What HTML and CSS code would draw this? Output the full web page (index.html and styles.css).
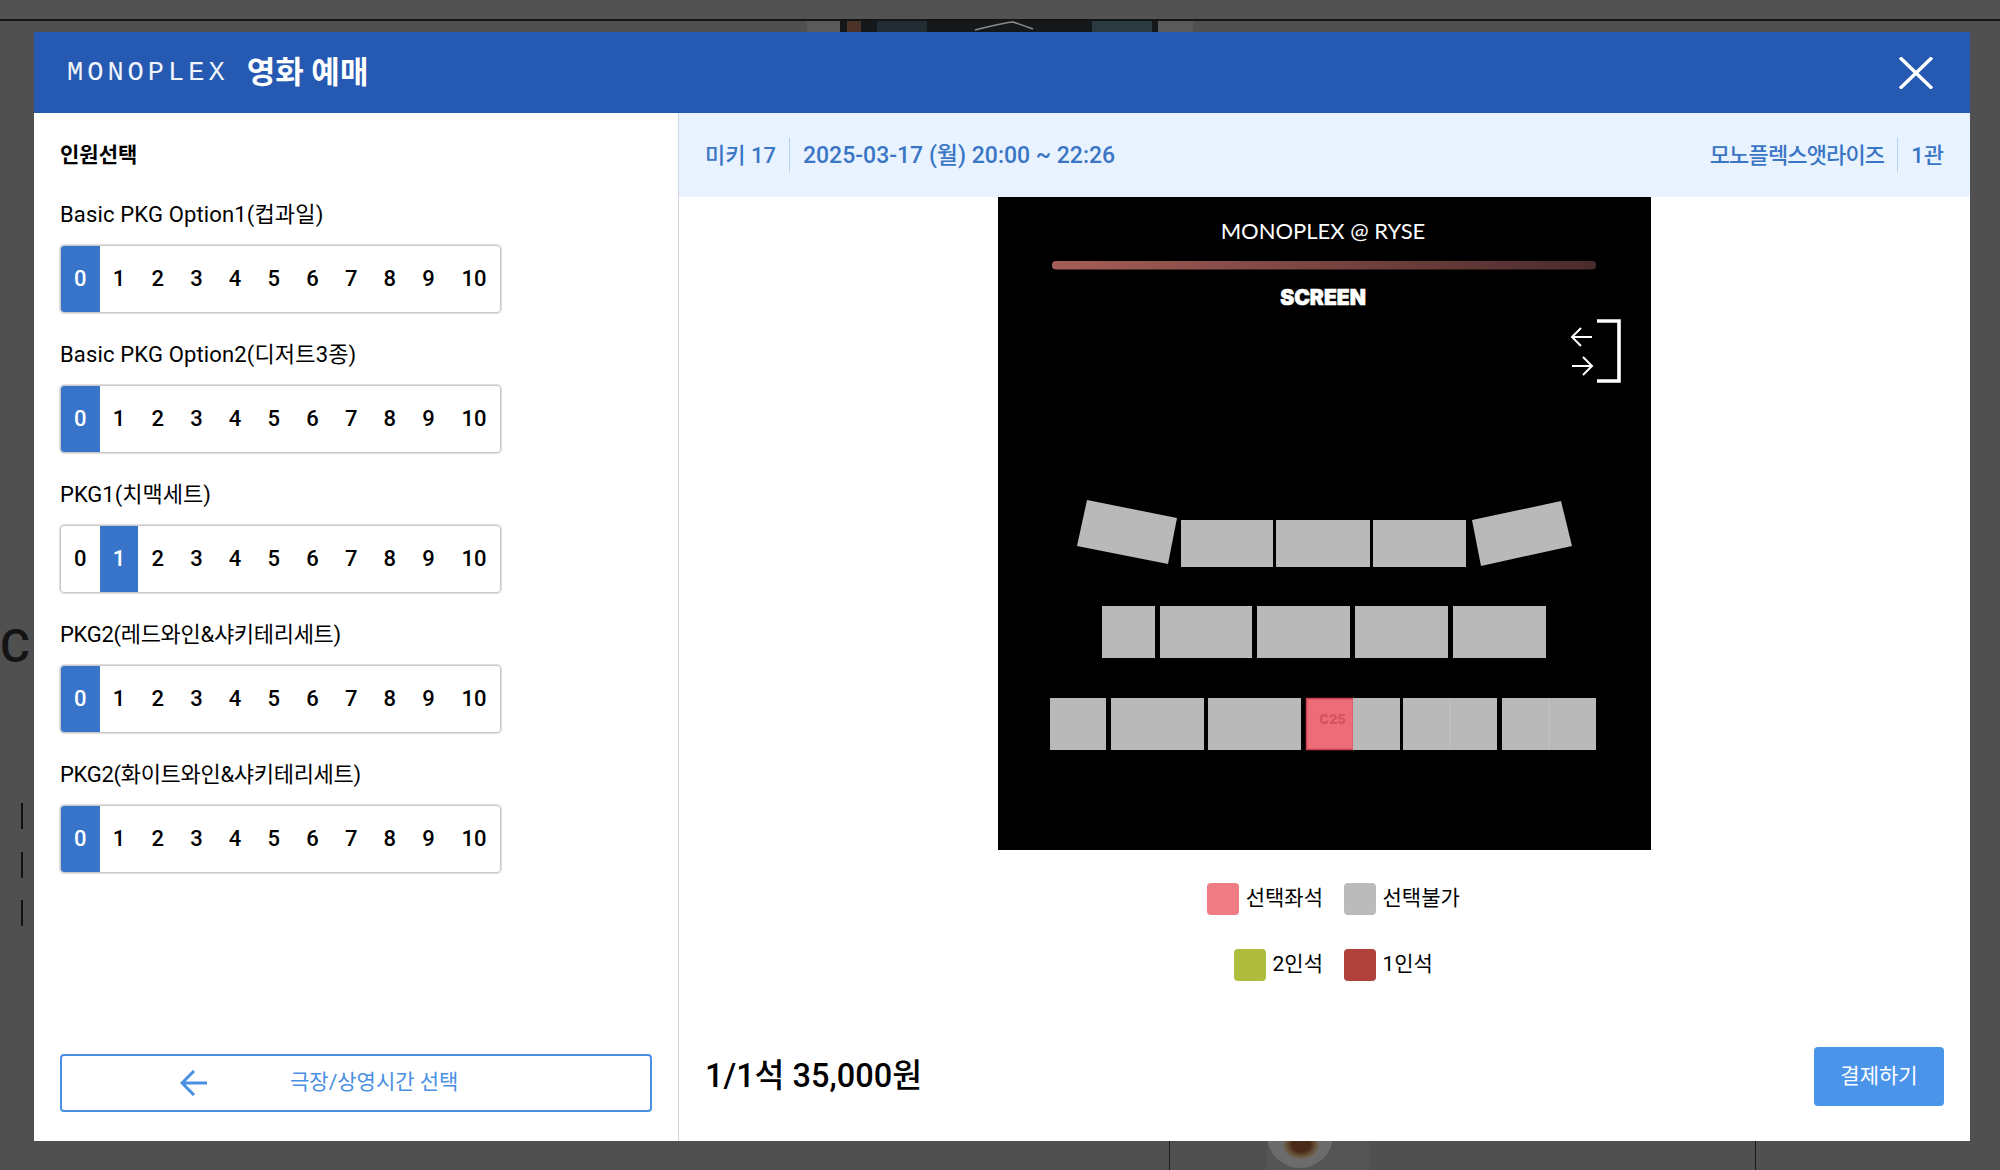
FILE: index.html
```html
<!DOCTYPE html>
<html lang="ko">
<head>
  <meta charset="UTF-8" />
  <title>MONOPLEX 영화 예매</title>
  <link rel="stylesheet" href="styles.css">
</head>
<body>
  <div class="backdrop">
    <div class="bg-topbar"></div>
    <svg class="bg-poster-top" viewBox="0 0 386 11" width="386" height="11">
      <rect width="386" height="11" fill="#5a5a5a" />
      <rect x="33" width="318" height="11" fill="#15181b" />
      <rect x="40" width="14" height="11" fill="#4a3229" />
      <rect x="70" width="50" height="11" fill="#222c33" />
      <rect x="285" width="60" height="11" fill="#2b3a3e" />
      <path d="M168 9 C185 5 195 2 206 1 C212 3 218 5 226 8" fill="none" stroke="#8a8a8a" stroke-width="1.5" />
    </svg>
    <div class="bg-letter">C</div>
    <div class="bg-tick tick1"></div>
    <div class="bg-tick tick2"></div>
    <div class="bg-tick tick3"></div>
    <div class="bg-poster-bottom"><div class="bg-plate"></div><div class="bg-food"></div></div>
    <div class="bg-vline vline1"></div>
    <div class="bg-vline vline2"></div>
  </div>

  <div class="modal">
    <header class="modal-head">
      <div class="brand">MONOPLEX</div>
      <div class="modal-title">영화 예매</div>
      <svg class="close" viewBox="0 0 34 32" width="34" height="32">
        <path d="M1 0.5 L33 31.5 M33 0.5 L1 31.5" fill="none" stroke="#fff" stroke-width="3.4" />
      </svg>
    </header>

    <div class="modal-body">
      <section class="people">
        <h2 class="people-title">인원선택</h2>

        <div class="opt-label wide">Basic PKG Option1(컵과일)</div>
        <div class="seg">
          <span class="cell on">0</span><span class="cell">1</span><span class="cell">2</span><span class="cell">3</span><span class="cell">4</span><span class="cell">5</span><span class="cell">6</span><span class="cell">7</span><span class="cell">8</span><span class="cell">9</span><span class="cell last">10</span>
        </div>

        <div class="opt-label wide">Basic PKG Option2(디저트3종)</div>
        <div class="seg">
          <span class="cell on">0</span><span class="cell">1</span><span class="cell">2</span><span class="cell">3</span><span class="cell">4</span><span class="cell">5</span><span class="cell">6</span><span class="cell">7</span><span class="cell">8</span><span class="cell">9</span><span class="cell last">10</span>
        </div>

        <div class="opt-label">PKG1(치맥세트)</div>
        <div class="seg">
          <span class="cell">0</span><span class="cell on">1</span><span class="cell">2</span><span class="cell">3</span><span class="cell">4</span><span class="cell">5</span><span class="cell">6</span><span class="cell">7</span><span class="cell">8</span><span class="cell">9</span><span class="cell last">10</span>
        </div>

        <div class="opt-label tight">PKG2(레드와인&amp;샤키테리세트)</div>
        <div class="seg">
          <span class="cell on">0</span><span class="cell">1</span><span class="cell">2</span><span class="cell">3</span><span class="cell">4</span><span class="cell">5</span><span class="cell">6</span><span class="cell">7</span><span class="cell">8</span><span class="cell">9</span><span class="cell last">10</span>
        </div>

        <div class="opt-label tight">PKG2(화이트와인&amp;샤키테리세트)</div>
        <div class="seg">
          <span class="cell on">0</span><span class="cell">1</span><span class="cell">2</span><span class="cell">3</span><span class="cell">4</span><span class="cell">5</span><span class="cell">6</span><span class="cell">7</span><span class="cell">8</span><span class="cell">9</span><span class="cell last">10</span>
        </div>

        <button class="back-btn">
          <svg class="back-arrow" viewBox="0 0 28 26" width="28" height="26">
            <path d="M14 1 L2 13 L14 25 M2 13 L27 13" fill="none" stroke="#4a90e2" stroke-width="3" />
          </svg>
          <span>극장/상영시간 선택</span>
        </button>
      </section>

      <section class="booking">
        <div class="info-bar">
          <span class="info-item">미키 17</span>
          <span class="info-item divided date">2025-03-17 (월) 20:00 ~ 22:26</span>
          <span class="info-item push">모노플렉스앳라이즈</span>
          <span class="info-item divided">1관</span>
        </div>

        <svg class="seatmap" viewBox="0 0 653 653" width="653" height="653">
          <defs>
            <linearGradient id="screenGrad">
              <stop offset="0" stop-color="#a65e57" />
              <stop offset="1" stop-color="#4a2b2b" />
            </linearGradient>
          </defs>
          <rect width="653" height="653" fill="#000" />
          <text class="map-name" x="325" y="42" text-anchor="middle">MONOPLEX @ RYSE</text>
          <rect x="54" y="64" width="544" height="8.5" rx="4" fill="url(#screenGrad)" />
          <text class="map-screen" x="325" y="108" text-anchor="middle">SCREEN</text>

          <path class="exit" d="M599 124 H621 V184 H599" />
          <path class="exit thin" d="M594 140 H574 M583 131 L574 140 L583 149" />
          <path class="exit thin" d="M574 169 H594 M585 160 L594 169 L585 178" />

          <polygon class="seat" points="89,303 179,321 170,367 79,349" />
          <rect class="seat" x="183" y="323" width="92" height="47" />
          <rect class="seat" x="278" y="323" width="94" height="47" />
          <rect class="seat" x="375" y="323" width="93" height="47" />
          <polygon class="seat" points="474,323 563,304 574,349 483,369" />

          <rect class="seat" x="104" y="409" width="53" height="52" />
          <rect class="seat" x="162" y="409" width="92" height="52" />
          <rect class="seat" x="259" y="409" width="93" height="52" />
          <rect class="seat" x="357" y="409" width="93" height="52" />
          <rect class="seat" x="455" y="409" width="93" height="52" />

          <rect class="seat" x="52" y="501" width="56" height="52" />
          <rect class="seat" x="113" y="501" width="93" height="52" />
          <rect class="seat" x="210" y="501" width="93" height="52" />
          <rect class="seat-on" x="308.5" y="501.5" width="47" height="51" />
          <text class="seat-code" x="334.5" y="527" text-anchor="middle">C25</text>
          <rect class="seat" x="355" y="501" width="47" height="52" />
          <rect class="seat" x="405" y="501" width="94" height="52" />
          <rect class="seat" x="504" y="501" width="94" height="52" />

          <path class="seam" d="M452 501 V553 M551 501 V553" />
        </svg>

        <div class="legend">
          <div class="legend-item"><i class="swatch pick"></i>선택좌석</div>
          <div class="legend-item right"><i class="swatch off"></i>선택불가</div>
          <div class="legend-item"><i class="swatch two"></i>2인석</div>
          <div class="legend-item right"><i class="swatch one"></i>1인석</div>
        </div>

        <footer class="pay-row">
          <div class="price">1/1석 35,000원</div>
          <button class="pay-btn"><span>결제하기</span></button>
        </footer>
      </section>
    </div>
  </div>
</body>
</html>
```

FILE: styles.css
```css
* {
  box-sizing: border-box;
}
html, body {
  margin: 0;
  height: 1170px;
  overflow: hidden;
}
body {
  position: relative;
  background: #505050;
  font-family: Roboto, "Noto Sans CJK KR", sans-serif;
  color: #000;
  padding: 32px 30px 0 34px;
}

/* dimmed page behind the modal */
.backdrop {
  position: absolute;
  inset: 0;
  overflow: hidden;
}
.bg-topbar {
  height: 21px;
  background: #525252;
  border-bottom: 2px solid #141414;
}
.bg-poster-top {
  position: absolute;
  left: 807px;
  top: 21px;
}
.bg-letter {
  position: absolute;
  left: 0;
  top: 614px;
  font-size: 46px;
  line-height: 64px;
  font-weight: 500;
  color: #141414;
}
.bg-tick {
  position: absolute;
  left: 21px;
  width: 2px;
  height: 26px;
  background: #111;
}
.tick1 { top: 803px; }
.tick2 { top: 852px; }
.tick3 { top: 900px; }
.bg-poster-bottom {
  position: absolute;
  left: 1267px;
  top: 1141px;
  width: 103px;
  height: 29px;
  background: #555;
  overflow: hidden;
}
.bg-plate {
  position: absolute;
  left: 0;
  top: -39px;
  width: 66px;
  height: 66px;
  border-radius: 50%;
  background: #6c6c6c;
}
.bg-food {
  position: absolute;
  left: 16px;
  top: -10px;
  width: 36px;
  height: 28px;
  border-radius: 50%;
  background: radial-gradient(#4a2a1a 0 35%, #6a5a40 60%, #6c6c6c 75%);
}
.bg-vline {
  position: absolute;
  top: 1141px;
  width: 1px;
  height: 29px;
  background: #1a1a1a;
}
.vline1 { left: 1169px; }
.vline2 { left: 1755px; }

.modal {
  position: relative;
  width: 1936px;
  height: 1109px;
  background: #fff;
  display: flex;
  flex-direction: column;
}
.modal-head {
  height: 81px;
  background: #2659b1;
  color: #fff;
  display: flex;
  align-items: center;
  padding: 0 37px 0 33px;
  flex-shrink: 0;
}
.brand {
  font-family: "Liberation Mono", monospace;
  font-size: 27px;
  letter-spacing: 4px;
  margin-right: 18px;
  color: #f2f5fb;
}
.modal-title {
  font-size: 31px;
  font-weight: 700;
  position: relative;
  top: -3px;
}
.close {
  margin-left: auto;
}

.modal-body {
  flex: 1;
  display: flex;
  min-height: 0;
}

/* left column */
.people {
  width: 645px;
  border-right: 1px solid #d4d8dc;
  padding: 0 26px 29px;
  display: flex;
  flex-direction: column;
}
.people-title {
  margin: 27px 0 30px;
  font-size: 21px;
  line-height: 30px;
  font-weight: 700;
}
.opt-label {
  font-size: 22px;
  line-height: 30px;
  height: 30px;
  margin-bottom: 15px;
  white-space: nowrap;
}
.opt-label.wide {
  letter-spacing: 0.15px;
}
.opt-label.tight {
  letter-spacing: -0.3px;
}
.seg {
  display: flex;
  width: 441px;
  height: 68px;
  border: 1px solid #c9c9c9;
  box-shadow: 0 0 1px 1px #ddd;
  border-radius: 4px;
  margin-bottom: 27px;
  overflow: hidden;
}
.cell {
  width: 38.7px;
  display: flex;
  align-items: center;
  justify-content: center;
  padding-bottom: 1px;
  font-size: 22px;
  font-weight: 500;
}
.cell.on {
  background: #3874ca;
  color: #fff;
}
.cell.last {
  flex: 1;
}
.back-btn {
  margin-top: auto;
  height: 58px;
  width: 592px;
  flex-shrink: 0;
  display: flex;
  align-items: center;
  background: #fff;
  border: 2px solid #4a90e2;
  border-radius: 4px;
  padding: 0 0 0 118px;
  color: #4a90e2;
  font: inherit;
  font-size: 21px;
}
.back-arrow {
  margin-right: 82px;
}
.back-btn span {
  position: relative;
  top: -3px;
}

/* right column */
.booking {
  flex: 1;
  display: flex;
  flex-direction: column;
  align-items: center;
}
.info-bar {
  width: 100%;
  height: 84px;
  flex-shrink: 0;
  background: #e8f3ff;
  display: flex;
  align-items: center;
  padding: 0 26px;
  color: #3b76c5;
  font-size: 22px;
  font-weight: 500;
}
.info-item {
  display: flex;
  align-items: center;
  height: 34px;
  padding-bottom: 4px;
  white-space: nowrap;
}
.info-item.divided {
  border-left: 1px solid #b5d3ee;
  margin-left: 13px;
  padding-left: 13px;
}
.info-item.date {
  font-size: 23px;
}
.info-item.push {
  margin-left: auto;
  letter-spacing: -0.85px;
}
.seatmap {
  display: block;
  flex-shrink: 0;
}
.map-name {
  font-family: Lato, sans-serif;
  font-size: 22px;
  fill: #fff;
}
.map-screen {
  font-family: Inter, sans-serif;
  font-size: 21px;
  font-weight: 900;
  fill: #fff;
  stroke: #fff;
  stroke-width: 0.6;
}
.exit {
  fill: none;
  stroke: #fff;
  stroke-width: 3.6;
}
.exit.thin {
  stroke-width: 2;
}
.seat {
  fill: #b9b9b9;
}
.seam {
  fill: none;
  stroke: #c4c4c4;
  stroke-width: 1;
}
.seat-on {
  fill: #ee6b78;
  stroke: #c9404c;
  stroke-width: 1.5;
}
.seat-code {
  font-family: Inter, sans-serif;
  font-size: 13px;
  font-weight: 800;
  fill: #d4525e;
}

.legend {
  display: grid;
  grid-template-columns: 136px 118.5px;
  column-gap: 20.5px;
  row-gap: 34px;
  margin-top: 33px;
  font-size: 21px;
  line-height: 30px;
}
.legend-item {
  display: flex;
  align-items: flex-start;
  justify-content: flex-end;
  height: 32px;
  white-space: nowrap;
}
.legend-item.right {
  justify-content: flex-start;
}
.swatch {
  width: 32px;
  height: 32px;
  border-radius: 4px;
  margin-right: 7px;
}
.pick { background: #f07c83; }
.off { background: #bbb; }
.two { background: #afbd3c; }
.one { background: #b0413b; }

.pay-row {
  margin-top: auto;
  width: 100%;
  display: flex;
  align-items: center;
  justify-content: space-between;
  padding: 0 26px 35px;
}
.price {
  font-size: 32.5px;
  font-weight: 500;
  padding-bottom: 8px;
}
.pay-btn {
  width: 130px;
  height: 59px;
  background: #4a94ea;
  border: 0;
  border-radius: 4px;
  color: #fff;
  font: inherit;
  font-size: 21px;
  padding: 0 0 5px;
}
```
